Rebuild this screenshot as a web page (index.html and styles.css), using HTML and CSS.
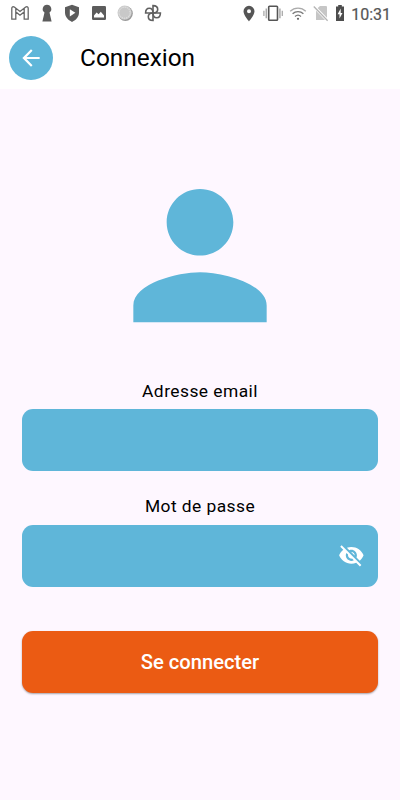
FILE: index.html
```
<!DOCTYPE html>
<html lang="fr">
<head>
  <meta charset="UTF-8">
  <meta name="viewport" content="width=device-width, initial-scale=1.0">
  <title>Connexion</title>
  <link rel="stylesheet" href="styles.css">
</head>
<body>
<header>
  <div class="status-bar">
    <div class="status-left">
      <svg width="20" height="26" viewBox="0 0 20 26"><path d="M1.8 19.2V8.3c0-1.5 1.4-2 2.5-1.2L10 11.5l5.7-4.4c1.1-.8 2.5-.3 2.5 1.2v10.9h-4v-7.3L10 15.2l-4.2-3.3v7.3zM5.8 12V8.3M14.2 12V8.3" fill="none" stroke="#666" stroke-width="1.3"/></svg>
      <svg width="12" height="26" viewBox="0 0 12 26"><path d="M6 4.8a4.3 4.3 0 0 1 2.5 7.8L10.6 21.5H1.4l2.1-8.9A4.3 4.3 0 0 1 6 4.8z" fill="#5c5c5c"/></svg>
      <svg width="16" height="26" viewBox="0 0 16 26"><path d="M8 4.8l7 2.5v5.2c0 4.2-2.8 7.4-7 9.4-4.2-2-7-5.2-7-9.4V7.3z" fill="#5c5c5c"/><path d="M5.8 9.2v7.2l5.6-3.6z" fill="#fff"/></svg>
      <svg width="14" height="26" viewBox="0 0 14 26"><rect y="6" width="14" height="14" rx="1.3" fill="#5c5c5c"/><path d="M2 17.5v-2l2.6-3 2 1.8 2.2-2.6 3.2 3.8v2z" fill="#fff"/></svg>
      <svg width="16" height="26" viewBox="0 0 16 26"><circle cx="8.4" cy="13.5" r="7.4" fill="#999"/><circle cx="7.6" cy="12.7" r="7.1" fill="#ccc"/><circle cx="7.6" cy="12.7" r="5.5" fill="#c8c8c8" stroke="#eee" stroke-width=".9" stroke-dasharray="1 1"/></svg>
      <svg width="18" height="26" viewBox="0 0 18 26"><g fill="none" stroke="#606060" stroke-width="1.6"><path id="blade" d="M9 13V5.6c3.3 0 4.700 1.700 4.700 3.700S12 13 9 13z"/><use href="#blade" transform="rotate(90 9 13)"/><use href="#blade" transform="rotate(180 9 13)"/><use href="#blade" transform="rotate(270 9 13)"/></g></svg>
    </div>
    <div class="status-right">
      <svg width="12" height="26" viewBox="0 0 12 26"><path d="M6 5.8a5.5 5.5 0 0 0-5.5 5.5C.5 15.3 6 21.4 6 21.4s5.5-6.1 5.5-10.1A5.5 5.5 0 0 0 6 5.8zm0 7.5a2 2 0 1 1 0-4 2 2 0 0 1 0 4z" fill="#555"/></svg>
      <svg width="20" height="26" viewBox="0 0 20 26"><rect x="5.7" y="6.3" width="8.8" height="14" rx=".8" fill="none" stroke="#555" stroke-width="1.6"/><path d="M3.3 8.5v9.8M16.9 8.5v9.8" stroke="#aaa" stroke-width="1.5"/><path d="M.9 10.7v5.4M19.3 10.7v5.4" stroke="#aaa" stroke-width="1.3"/></svg>
      <svg width="18" height="26" viewBox="0 0 18 26"><g fill="none" stroke-width="1.3"><path d="M1.2 11.2a11.2 11.2 0 0 1 15.6 0" stroke="#aaa"/><path d="M3.6 13.8a7.8 7.8 0 0 1 10.8 0" stroke="#777"/><path d="M6 16.4a4.5 4.5 0 0 1 6 0" stroke="#777"/></g><circle cx="9" cy="18.8" r="1.1" fill="#666"/></svg>
      <svg width="16" height="26" viewBox="0 0 16 26"><path d="M7 6h6q1 0 1 1v13H3V9.5z" fill="#c6c6c6"/><path d="M.8 6.2l14 14.5" stroke="#fff" stroke-width="3"/><path d="M.8 6.5l13.8 14.3" stroke="#b4b4b4" stroke-width="1.3"/></svg>
      <svg width="10" height="26" viewBox="0 0 10 26"><path d="M3.2 5h3.6v1.5H9V21H1V6.5h2.2z" fill="#4d4d4d"/><path d="M5.7 8.6L2.6 14.3h1.9v4.3l3-5.7H5.700z" fill="#fff"/></svg>
      <span class="clock">10:31</span>
    </div>
  </div>
  <div class="app-bar">
    <button class="back" type="button" aria-label="Retour">
      <svg width="26" height="26" viewBox="0 0 24 24"><path d="M20 11H7.830l5.590-5.590L12 4l-8 8 8 8 1.410-1.410L7.830 13H20v-2z" fill="#fff"/></svg>
    </button>
    <h1>Connexion</h1>
  </div>
</header>
<main>
  <svg class="avatar" viewBox="0 -0.07 24 24"><path d="M12 12c2.210 0 4-1.790 4-4s-1.790-4-4-4-4 1.790-4 4 1.790 4 4 4zm0 2c-2.670 0-8 1.340-8 4v2h16v-2c0-2.660-5.330-4-8-4z" fill="#5fb6d9"/></svg>
  <form>
    <div class="form-group">
      <label for="email">Adresse email</label>
      <div class="field"><input type="email" id="email"></div>
    </div>
    <div class="form-group">
      <label for="password">Mot de passe</label>
      <div class="field">
        <input type="password" id="password">
        <svg width="26.7" height="26.7" viewBox="0 0 24 24"><path d="M12 7c2.760 0 5 2.240 5 5 0 .65-.13 1.260-.36 1.830l2.920 2.920c1.510-1.260 2.700-2.890 3.430-4.750-1.730-4.390-6-7.500-11-7.500-1.400 0-2.740.25-3.980.7l2.160 2.160C10.740 7.130 11.350 7 12 7zM2 4.270l2.280 2.280.46.46C3.080 8.300 1.780 10.020 1 12c1.730 4.390 6 7.500 11 7.500 1.550 0 3.030-.3 4.380-.84l.42.42L19.730 22 21 20.730 3.270 3 2 4.270zM7.530 9.800l1.550 1.550c-.05.21-.08.43-.08.65 0 1.660 1.340 3 3 3 .22 0 .44-.03.65-.08l1.550 1.550c-.67.33-1.410.53-2.200.53-2.760 0-5-2.240-5-5 0-.79.2-1.530.53-2.200zm4.310-.78l3.150 3.150.02-.16c0-1.660-1.340-3-3-3l-.17.01z" fill="#fff"/></svg>
      </div>
    </div>
    <button class="submit" type="submit">Se connecter</button>
  </form>
</main>
</body>
</html>
```
FILE: styles.css
```
* {
  box-sizing: border-box;
}
body {
  font-family: Roboto, sans-serif;
  margin: 0;
  min-height: 800px;
  background-color: #fef7ff;
  color: #000;
}
svg {
  display: block;
  flex-shrink: 0;
}
header {
  height: 89px;
  background-color: #fff;
}
.status-bar {
  display: flex;
  justify-content: space-between;
  height: 27px;
  padding: 0 9px 0 10px;
}
.status-left {
  display: flex;
  gap: 11.2px;
}
.status-right {
  display: flex;
  gap: 6px;
}
.status-right svg:nth-child(1) {
  margin-right: 2px;
}
.clock {
  font-size: 16px;
  line-height: 29px;
  color: #555;
  -webkit-text-stroke: 0.2px #555;
}
.app-bar {
  display: flex;
  align-items: center;
  height: 61px;
  padding-left: 9px;
}
.back {
  display: flex;
  align-items: center;
  justify-content: center;
  width: 44px;
  height: 44px;
  padding: 0;
  border: none;
  border-radius: 50%;
  background-color: #5fb6d9;
}
h1 {
  margin: 0 0 1px 27px;
  font-size: 24.4px;
  font-weight: 400;
}
main {
  padding: 66.4px 22.4px 0;
}
.avatar {
  width: 200px;
  height: 200px;
  margin: 0 auto;
}
form {
  margin-top: 24.3px;
}
.form-group {
  margin-bottom: 23.7px;
}
label {
  display: block;
  height: 29.6px;
  line-height: 22px;
  font-size: 17.4px;
  letter-spacing: 0.45px;
  text-align: center;
}
.field {
  display: flex;
  align-items: center;
  height: 62px;
  padding-right: 13px;
  border-radius: 11px;
  background-color: #5fb6d9;
}
.field input {
  flex: 1;
  min-width: 0;
  height: 100%;
  padding: 0 13px;
  border: none;
  outline: none;
  background: none;
  font-size: 18px;
}
.submit {
  display: block;
  width: 100%;
  height: 62px;
  margin-top: 44.5px;
  border: none;
  border-radius: 11px;
  background-color: #eb5b13;
  box-shadow: 0 1px 2px rgba(0, 0, 0, 0.35);
  color: #fff;
  font-family: inherit;
  font-size: 20.2px;
  font-weight: 500;
}
```
